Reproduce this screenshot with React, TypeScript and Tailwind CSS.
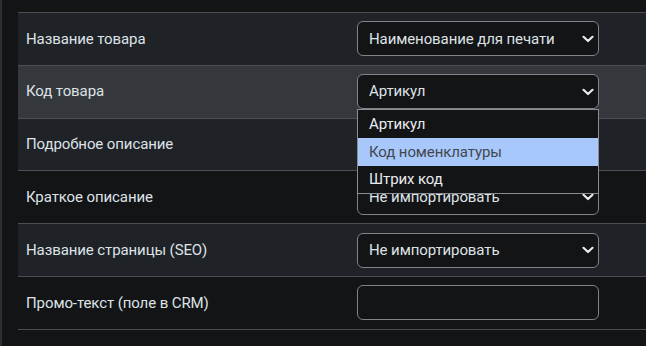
import React from "react";

function Select({ value, hidden }: { value: string; hidden?: boolean }) {
  return (
    <div className="relative w-[242px] h-[35px] rounded-[6px] border border-[#7f8488] bg-[#121416] flex items-center pl-[11px] text-[#dee2e6]">
      <span className={hidden ? "invisible" : ""}>{value}</span>
      <div className="absolute right-[2px] top-0 bottom-0 w-[14px] flex items-center">
        <svg width="12" height="8" viewBox="0 0 12 8">
          <path d="M1.5 1.8 L6 6 L10.5 1.8" fill="none" stroke="#e9ecef" strokeWidth="2.2" strokeLinecap="round" strokeLinejoin="round" />
        </svg>
      </div>
    </div>
  );
}

function Row({ label, bg, children }: { label: string; bg: string; children: React.ReactNode }) {
  return (
    <div className={`flex items-center h-[52.8px] border-b border-[#4b4f53] ${bg}`}>
      <div className="w-[331px] pl-[8px] text-[#dee2e6]">{label}</div>
      <div className="pl-[8px] relative">{children}</div>
    </div>
  );
}

export default function App() {
  return (
    <div
      className="w-[646px] h-[346px] overflow-hidden bg-[#121416] flex text-[15px] tracking-[-0.1px]"
      style={{ fontFamily: 'Roboto, "Noto Sans", sans-serif' }}
    >
      <div className="w-[2px] h-full bg-[#2b2e32]" />
      <div className="w-[16px]" />
      <div className="flex-1 pt-[12px]">
        <div className="border-t border-[#4b4f53]">
          <Row label="Название товара" bg="bg-[#1f2226]">
            <Select value="Наименование для печати" />
          </Row>
          <Row label="Код товара" bg="bg-[#34383c]">
            <Select value="Артикул" />
            <div className="absolute left-[8px] top-[35px] w-[242px] z-10 border border-[#8a8e92] bg-[#121416] text-[#e9ecef]">
              <div className="h-[28px] flex items-center pl-[11px]">Артикул</div>
              <div className="h-[28px] flex items-center pl-[11px] bg-[#a8c8fc] text-[#43474c]">Код номенклатуры</div>
              <div className="h-[27px] flex items-center pl-[11px]">Штрих код</div>
            </div>
          </Row>
          <Row label="Подробное описание" bg="bg-[#1f2226]">
            <Select value="Не импортировать" hidden />
          </Row>
          <Row label="Краткое описание" bg="bg-[#121416]">
            <Select value="Не импортировать" />
          </Row>
          <Row label="Название страницы (SEO)" bg="bg-[#1f2226]">
            <Select value="Не импортировать" />
          </Row>
          <Row label="Промо-текст (поле в CRM)" bg="bg-[#121416]">
            <div className="w-[242px] h-[35px] rounded-[6px] border border-[#7f8488] bg-[#121416]" />
          </Row>
        </div>
      </div>
    </div>
  );
}
